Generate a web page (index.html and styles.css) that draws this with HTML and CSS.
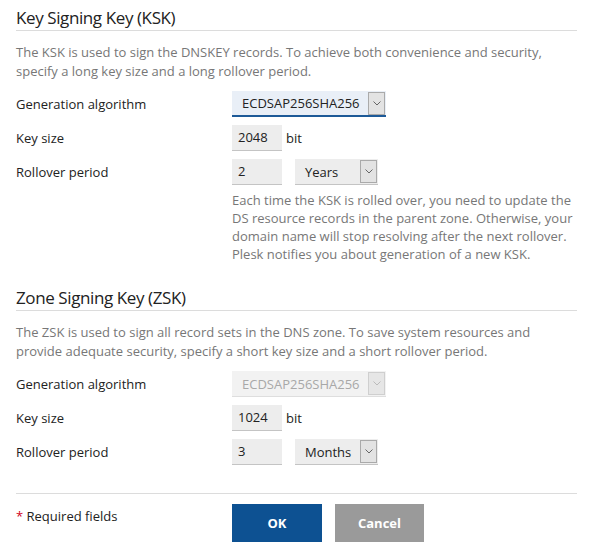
FILE: index.html
```html
<!DOCTYPE html>
<html>
<head>
<meta charset="utf-8">
<link rel="stylesheet" href="styles.css">
</head>
<body>
<div class="page">
  <section class="block">
    <h2 class="title">Key Signing Key (KSK)</h2>
    <p class="desc">The KSK is used to sign the DNSKEY records. To achieve both convenience and security, specify a long key size and a long rollover period.</p>
    <div class="rows">
      <div class="row">
        <div class="label">Generation algorithm</div>
        <div class="field">
          <div class="select select-wide select-focus">
            <span class="value">ECDSAP256SHA256</span>
            <span class="arrow"><svg width="8" height="5" viewBox="0 0 8 5"><path d="M0.5 0.5 L4 4 L7.5 0.5" fill="none" stroke="#666" stroke-width="1"/></svg></span>
          </div>
        </div>
      </div>
      <div class="row">
        <div class="label">Key size</div>
        <div class="field">
          <div class="input">2048</div><span class="unit">bit</span>
        </div>
      </div>
      <div class="row">
        <div class="label">Rollover period</div>
        <div class="field">
          <div class="input">2</div>
          <div class="select select-period">
            <span class="value">Years</span>
            <span class="arrow"><svg width="8" height="5" viewBox="0 0 8 5"><path d="M0.5 0.5 L4 4 L7.5 0.5" fill="none" stroke="#666" stroke-width="1"/></svg></span>
          </div>
        </div>
      </div>
    </div>
    <p class="hint">Each time the KSK is rolled over, you need to update the DS resource records in the parent zone. Otherwise, your domain name will stop resolving after the next rollover. Plesk notifies you about generation of a new KSK.</p>
  </section>

  <section class="block block-zsk">
    <h2 class="title">Zone Signing Key (ZSK)</h2>
    <p class="desc">The ZSK is used to sign all record sets in the DNS zone. To save system resources and provide adequate security, specify a short key size and a short rollover period.</p>
    <div class="rows">
      <div class="row">
        <div class="label">Generation algorithm</div>
        <div class="field">
          <div class="select select-wide select-disabled">
            <span class="value">ECDSAP256SHA256</span>
            <span class="arrow"><svg width="8" height="5" viewBox="0 0 8 5"><path d="M0.5 0.5 L4 4 L7.5 0.5" fill="none" stroke="#bbb" stroke-width="1"/></svg></span>
          </div>
        </div>
      </div>
      <div class="row">
        <div class="label">Key size</div>
        <div class="field">
          <div class="input">1024</div><span class="unit">bit</span>
        </div>
      </div>
      <div class="row">
        <div class="label">Rollover period</div>
        <div class="field">
          <div class="input">3</div>
          <div class="select select-period">
            <span class="value">Months</span>
            <span class="arrow"><svg width="8" height="5" viewBox="0 0 8 5"><path d="M0.5 0.5 L4 4 L7.5 0.5" fill="none" stroke="#666" stroke-width="1"/></svg></span>
          </div>
        </div>
      </div>
    </div>
  </section>

  <div class="footer">
    <div class="required"><span class="star">*</span> Required fields</div>
    <div class="buttons">
      <button class="btn btn-ok">OK</button>
      <button class="btn btn-cancel">Cancel</button>
    </div>
  </div>
</div>
</body>
</html>
```
FILE: styles.css
```css
html, body {
  margin: 0;
  padding: 0;
  background: #fff;
}
body {
  font-family: "Open Sans", "Liberation Sans", sans-serif;
  font-size: 13px;
  color: #222;
}
.page {
  padding: 6px 18px 0 16px;
}
.title {
  margin: 0;
  font-size: 17px;
  letter-spacing: -0.4px;
  font-weight: 400;
  line-height: 24px;
  color: #222;
  border-bottom: 1px solid #dcdcdc;
}
.desc {
  margin: 12px 0 0;
  line-height: 19px;
  color: #777;
}
.rows {
  margin-top: 10px;
  display: flex;
  flex-direction: column;
  gap: 8px;
}
.row {
  display: grid;
  grid-template-columns: 216px 1fr;
  align-items: center;
  height: 26px;
}
.field {
  display: flex;
  align-items: center;
}
.input {
  box-sizing: border-box;
  width: 50px;
  height: 26px;
  line-height: 25px;
  padding-left: 6px;
  background: #ededed;
  border-bottom: 1px solid #c4c4c4;
}
.unit {
  margin-left: 4px;
}
.select {
  box-sizing: border-box;
  height: 26px;
  display: flex;
  align-items: center;
  justify-content: space-between;
  background: #ededed;
  border-bottom: 1px solid #c4c4c4;
  padding: 1px 1px 1px 10px;
}
.select .value {
  line-height: 24px;
}
.select .arrow {
  box-sizing: border-box;
  width: 17px;
  height: 23px;
  border: 1px solid #aaa;
  background: #e3e3e3;
  display: flex;
  align-items: center;
  justify-content: center;
}
.select-wide {
  width: 154px;
}
.select-focus {
  background: #e9eff7;
  border-bottom: 2px solid #1d5a98;
}
.select-disabled {
  background: #f2f2f2;
  color: #a8a8a8;
  border-bottom: 1px solid #dedede;
}
.select-disabled .arrow {
  border-color: #cfcfcf;
  background: #e6e6e6;
}
.select-period {
  width: 83px;
  margin-left: 13px;
}
.hint {
  margin: 6px 0 0 216px;
  line-height: 18px;
  color: #777;
}
.block-zsk {
  margin-top: 23px;
}
.footer {
  margin-top: 28px;
  border-top: 1px solid #dcdcdc;
  padding-top: 10px;
  display: grid;
  grid-template-columns: 216px 1fr;
}
.required {
  line-height: 24px;
}
.star {
  color: #d0021b;
}
.buttons {
  display: flex;
  gap: 13px;
}
.btn {
  font-family: "Open Sans", "Liberation Sans", sans-serif;
  font-size: 13px;
  font-weight: 700;
  color: #fff;
  border: 0;
  height: 38px;
  padding: 0;
}
.btn-ok {
  width: 90px;
  background: #0d5192;
}
.btn-cancel {
  width: 89px;
  background: #9a9a9a;
}
```
